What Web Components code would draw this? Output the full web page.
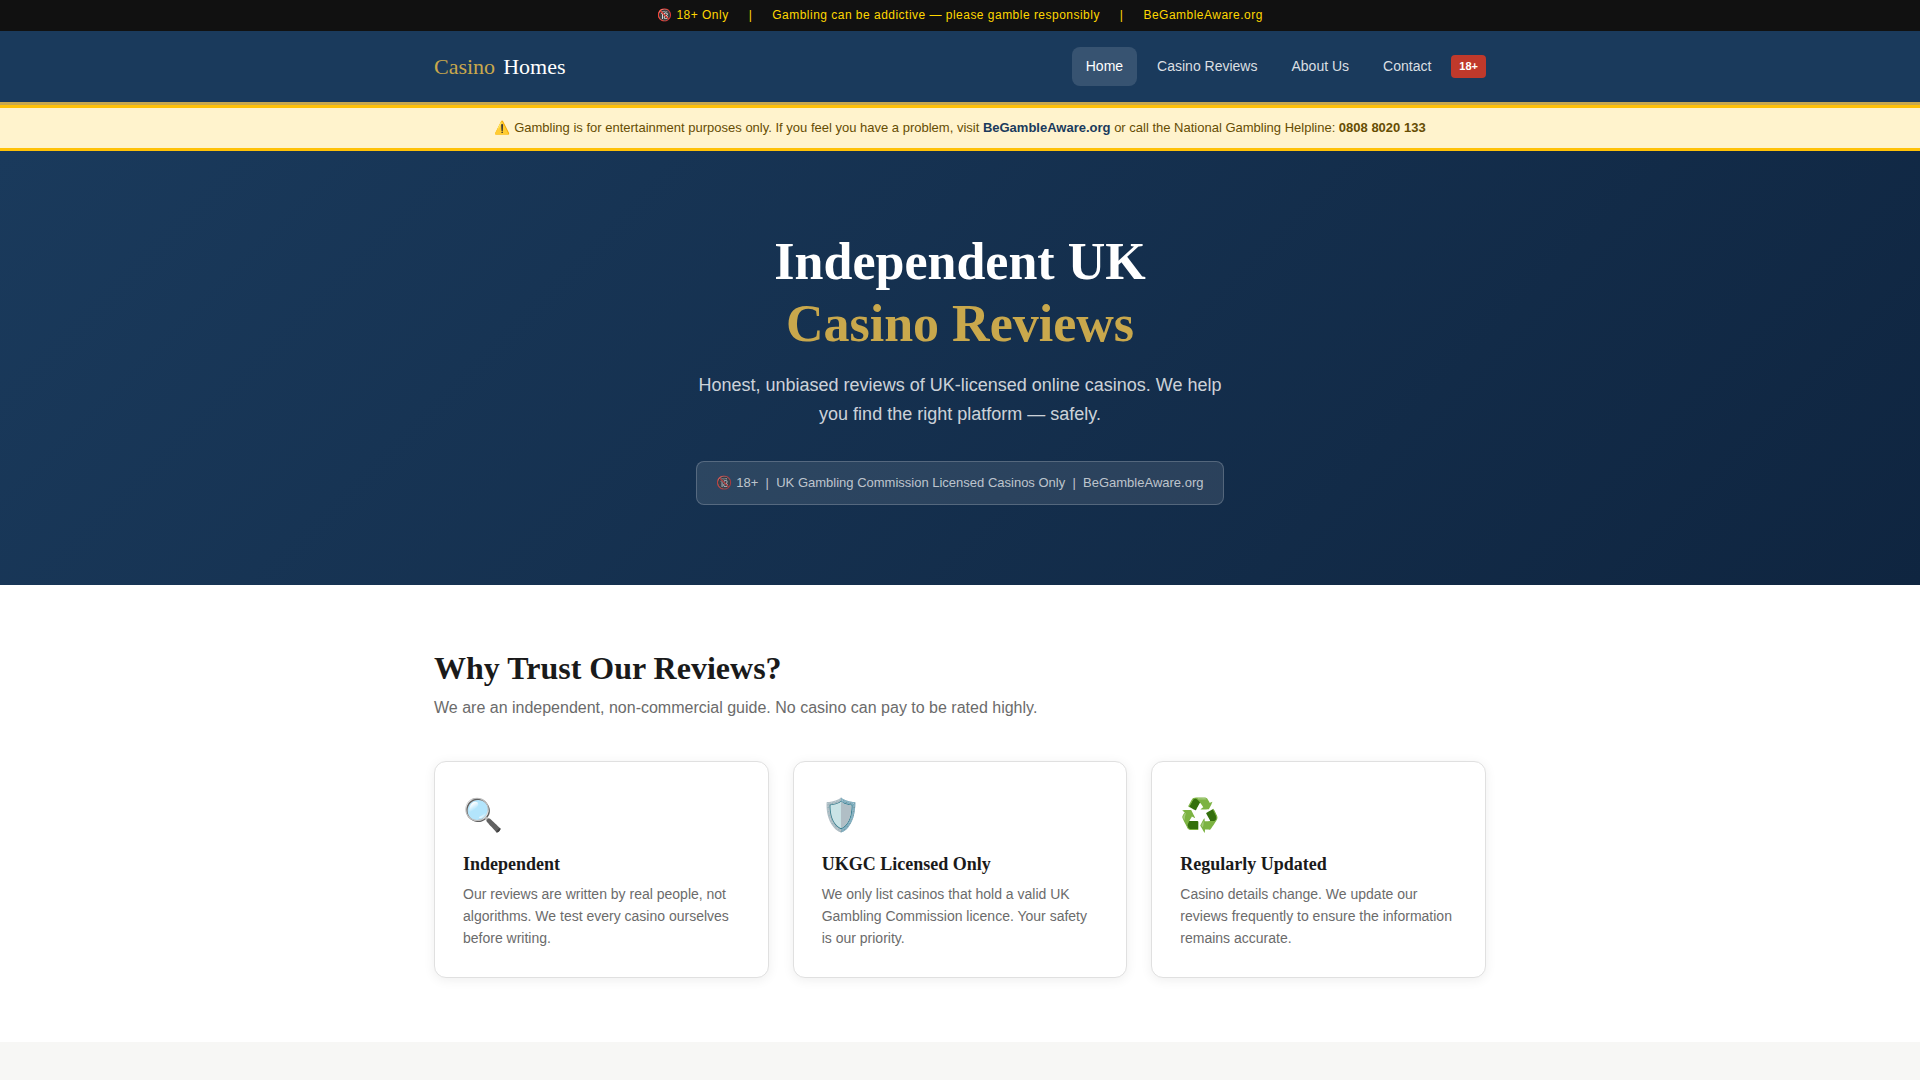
<!DOCTYPE html>
<html lang="en">
<head>
  <meta charset="UTF-8">
  <meta name="viewport" content="width=device-width, initial-scale=1.0">
  <title>Casino Homes</title>
  <style>
    :root {
      --navy: #1a3a5c;
      --gold: #c9a84c;
      --muted: #6b6b6b;
      --serif: Georgia, "Liberation Serif", "Noto Color Emoji", serif;
      --sans: "Liberation Sans", Arial, "Noto Color Emoji", sans-serif;
    }
    body {
      margin: 0;
      font: 16px/26px var(--sans);
      color: #1a1a1a;
      background: #f7f7f5;
    }
  </style>
</head>
<body>
  <age-bar></age-bar>
  <site-header></site-header>
  <warning-banner></warning-banner>
  <main>
    <hero-section>
      Independent UK
      <span slot="accent">Casino Reviews</span>
      <span slot="lead">Honest, unbiased reviews of UK-licensed online casinos. We help you find the right platform — safely.</span>
      <span slot="notice">🔞 18+ &nbsp;|&nbsp; UK Gambling Commission Licensed Casinos Only &nbsp;|&nbsp; BeGambleAware.org</span>
    </hero-section>
    <trust-section>
      <span slot="title">Why Trust Our Reviews?</span>
      <span slot="subtitle">We are an independent, non-commercial guide. No casino can pay to be rated highly.</span>
      <trust-card icon="🔍" heading="Independent">Our reviews are written by real people, not algorithms. We test every casino ourselves before writing.</trust-card>
      <trust-card icon="🛡️" heading="UKGC Licensed Only">We only list casinos that hold a valid UK Gambling Commission licence. Your safety is our priority.</trust-card>
      <trust-card icon="♻️" heading="Regularly Updated">Casino details change. We update our reviews frequently to ensure the information remains accurate.</trust-card>
    </trust-section>
  </main>

  <script>
    class AgeBar extends HTMLElement {
      connectedCallback() {
        this.attachShadow({ mode: 'open' });
        this.shadowRoot.innerHTML = `
          <style>
            :host {
              display: flex;
              justify-content: center;
              gap: 20px;
              padding: 6px 24px;
              background: #111;
              color: #ffd700;
              font-size: 12px;
              line-height: 19px;
              letter-spacing: 0.04em;
            }
            a { color: inherit; text-decoration: none; }
          </style>
          <span>🔞 18+ Only</span>
          <span>|</span>
          <span>Gambling can be addictive — please gamble responsibly</span>
          <span>|</span>
          <a href="#">BeGambleAware.org</a>
        `;
      }
    }

    class SiteHeader extends HTMLElement {
      connectedCallback() {
        this.attachShadow({ mode: 'open' });
        this.shadowRoot.innerHTML = `
          <style>
            :host {
              display: block;
              background: var(--navy);
              border-bottom: 3px solid var(--gold);
            }
            .inner {
              display: flex;
              justify-content: space-between;
              align-items: center;
              box-sizing: border-box;
              max-width: 1100px;
              margin: 0 auto;
              padding: 16px 24px;
            }
            .logo {
              display: flex;
              gap: 8px;
              font-family: var(--serif);
              font-size: 22px;
              color: #fff;
              text-decoration: none;
            }
            .logo span { color: var(--gold); }
            nav {
              display: flex;
              align-items: center;
              gap: 6px;
            }
            nav a {
              padding: 8px 14px;
              border-radius: 8px;
              color: rgba(255, 255, 255, 0.85);
              font-size: 14px;
              line-height: 23px;
              text-decoration: none;
            }
            nav a:hover,
            nav a.active {
              background: rgba(255, 255, 255, 0.13);
              color: #fff;
            }
            .badge {
              padding: 3px 8px;
              border-radius: 4px;
              background: #c0392b;
              color: #fff;
              font-size: 11px;
              font-weight: bold;
              line-height: 17px;
            }
          </style>
          <header class="inner">
            <a class="logo" href="#"><span>Casino</span> Homes</a>
            <nav>
              <a href="#" class="active">Home</a>
              <a href="#">Casino Reviews</a>
              <a href="#">About Us</a>
              <a href="#">Contact</a>
              <span class="badge">18+</span>
            </nav>
          </header>
        `;
      }
    }

    class WarningBanner extends HTMLElement {
      connectedCallback() {
        this.attachShadow({ mode: 'open' });
        this.shadowRoot.innerHTML = `
          <style>
            :host {
              display: block;
              padding: 10px 24px;
              border-top: 3px solid #ffc107;
              border-bottom: 3px solid #ffc107;
              background: #fff3cd;
              color: #664d03;
              font-size: 13px;
              line-height: 20px;
              text-align: center;
            }
            a {
              color: var(--navy);
              font-weight: bold;
              text-decoration: none;
            }
          </style>
          ⚠️ Gambling is for entertainment purposes only. If you feel you have a problem, visit
          <a href="#">BeGambleAware.org</a>
          or call the National Gambling Helpline: <strong>0808 8020 133</strong>
        `;
      }
    }

    class HeroSection extends HTMLElement {
      connectedCallback() {
        this.attachShadow({ mode: 'open' });
        this.shadowRoot.innerHTML = `
          <style>
            :host {
              display: block;
              padding: 80px 24px;
              background: linear-gradient(135deg, var(--navy) 0%, #0f2540 100%);
              color: #fff;
              text-align: center;
            }
            h1 {
              margin: 0 0 16px;
              font-family: var(--serif);
              font-size: 52px;
              line-height: 62px;
            }
            .accent {
              display: block;
              color: var(--gold);
            }
            p {
              max-width: 540px;
              margin: 0 auto 32px;
              color: rgba(255, 255, 255, 0.8);
              font-size: 18px;
              line-height: 29px;
            }
            .notice {
              display: inline-block;
              vertical-align: top;
              padding: 10px 20px;
              border: 1px solid rgba(255, 255, 255, 0.2);
              border-radius: 8px;
              background: rgba(255, 255, 255, 0.1);
              color: rgba(255, 255, 255, 0.7);
              font-size: 13px;
              line-height: 22px;
            }
          </style>
          <h1><slot></slot><span class="accent"><slot name="accent"></slot></span></h1>
          <p><slot name="lead"></slot></p>
          <div class="notice"><slot name="notice"></slot></div>
        `;
      }
    }

    class TrustSection extends HTMLElement {
      connectedCallback() {
        this.attachShadow({ mode: 'open' });
        this.shadowRoot.innerHTML = `
          <style>
            :host {
              display: block;
              padding: 64px 0;
              background: #fff;
            }
            .inner {
              box-sizing: border-box;
              max-width: 1100px;
              margin: 0 auto;
              padding: 0 24px;
            }
            h2 {
              margin: 0 0 8px;
              font-family: var(--serif);
              font-size: 32px;
              line-height: 38px;
            }
            p {
              margin: 0 0 40px;
              color: var(--muted);
            }
            .grid {
              display: grid;
              grid-template-columns: repeat(auto-fit, minmax(280px, 1fr));
              gap: 24px;
            }
          </style>
          <section class="inner">
            <h2><slot name="title"></slot></h2>
            <p><slot name="subtitle"></slot></p>
            <div class="grid"><slot></slot></div>
          </section>
        `;
      }
    }

    class TrustCard extends HTMLElement {
      connectedCallback() {
        this.attachShadow({ mode: 'open' });
        this.shadowRoot.innerHTML = `
          <style>
            :host {
              display: block;
              padding: 28px;
              border: 1px solid #e0e0e0;
              border-radius: 12px;
              background: #fff;
              box-shadow: 0 2px 12px rgba(0, 0, 0, 0.07);
            }
            .icon {
              margin-bottom: 12px;
              font-size: 32px;
              line-height: 51px;
            }
            h3 {
              margin: 0 0 8px;
              font-family: var(--serif);
              font-size: 18px;
              line-height: 22px;
            }
            p {
              margin: 0;
              color: var(--muted);
              font-size: 14px;
              line-height: 22px;
            }
          </style>
          <div class="icon">${this.getAttribute('icon')}</div>
          <h3>${this.getAttribute('heading')}</h3>
          <p><slot></slot></p>
        `;
      }
    }

    customElements.define('age-bar', AgeBar);
    customElements.define('site-header', SiteHeader);
    customElements.define('warning-banner', WarningBanner);
    customElements.define('hero-section', HeroSection);
    customElements.define('trust-section', TrustSection);
    customElements.define('trust-card', TrustCard);
  </script>
</body>
</html>
